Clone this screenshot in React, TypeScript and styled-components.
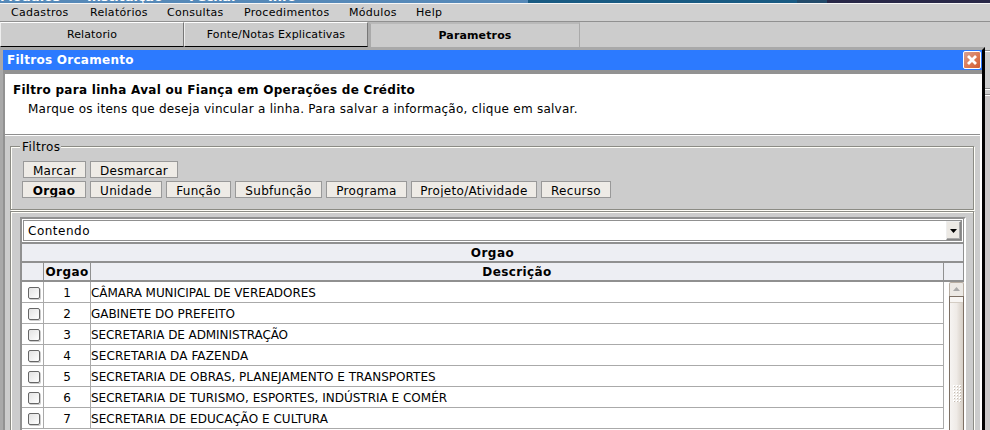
import React from "react";
import styled, { createGlobalStyle } from "styled-components";

const GlobalStyle = createGlobalStyle`
  * { box-sizing: border-box; }
  html, body { margin: 0; padding: 0; overflow: hidden; }
  body { width: 990px; height: 430px; background: #ccc; color: #000; font: 12px "DejaVu Sans", sans-serif; }
  button { font-family: inherit; color: inherit; margin: 0; }
`;

const Screen = styled.div`
  width: 990px;
  height: 430px;
  overflow: hidden;
  display: flex;
  flex-direction: column;
  background: #ccc;
`;

const TopStrip = styled.div`
  height: 3px;
  flex: none;
  display: flex;
  align-items: flex-end;
  overflow: hidden;
  background: linear-gradient(90deg, #5689b8 528px, #195b83 528px 797px, #234b6a 797px 827px, #292848 827px);
  color: #fff;
  font-size: 13px;
  font-weight: bold;
  letter-spacing: -0.2px;
  line-height: 16px;
`;

const StripItem = styled.span<{ $w: number }>`
  width: ${(p) => p.$w}px;
  flex: none;
  white-space: nowrap;
  margin-bottom: -2px;
`;

const MenuBar = styled.nav`
  height: 19px;
  flex: none;
  display: flex;
  padding-left: 11px;
  background: #d0d0d0;
  border-top: 1px solid #f7f7f7;
  border-bottom: 1px solid #909090;
  font-size: 11px;
  letter-spacing: 0.3px;
  line-height: 17px;
`;

const MenuItem = styled.span<{ $w: number }>`
  width: ${(p) => p.$w}px;
  white-space: nowrap;
`;

const TabBar = styled.div`
  height: 25px;
  flex: none;
  display: flex;
  background: #ccc;
  letter-spacing: 0.13px;
`;

const Tab = styled.div<{ $w: number }>`
  width: ${(p) => p.$w}px;
  height: 25px;
  border: 1px solid;
  border-color: #fff #777 #000 #eee;
  text-align: center;
  font-size: 11px;
  line-height: 23px;
`;

const ActiveTab = styled.div`
  width: 212px;
  height: 25px;
  border: solid #aaa;
  border-width: 2px 1px 0 3px;
  border-top-color: #b9b9b9;
  text-align: center;
  font-size: 11px;
  font-weight: bold;
  line-height: 23px;
`;

const Workspace = styled.div`
  flex: 1;
  min-height: 0;
  display: flex;
`;

const Dialog = styled.section`
  width: 985px;
  display: flex;
  flex-direction: column;
  border: 3px solid #a9a9a9;
  border-right-color: #000;
  border-bottom: 0;
  background: #929292;
`;

const TitleBar = styled.header`
  height: 20px;
  flex: none;
  display: flex;
  align-items: center;
  justify-content: space-between;
  padding: 0 1px 0 4px;
  background: #2c7aff;
  color: #fff;
  font-weight: bold;
  letter-spacing: 0.27px;
  line-height: 20px;
`;

const CloseButton = styled.button`
  width: 18px;
  height: 18px;
  padding: 0;
  display: flex;
  border: 1px solid #fff;
  border-radius: 2px;
  background: linear-gradient(135deg, #d4a196, #dc7954 55%, #cf5b31);
`;

const DialogBody = styled.div`
  flex: 1;
  min-height: 0;
  margin: 4px 0 0 2px;
  display: flex;
  flex-direction: column;
  background: #ccc;
  border-right: 2px solid #fff;
`;

const Intro = styled.div`
  height: 62px;
  flex: none;
  padding: 8px 8px 0;
  background: #fff;
  border-bottom: 1px solid #fff;
  box-shadow: inset 0 -1px #8f8f8f;
`;

const Heading = styled.h1`
  margin: 0;
  font-size: 12px;
  letter-spacing: 0.28px;
  line-height: 16px;
  white-space: nowrap;
`;

const Hint = styled.p`
  margin: 3px 0 0 15px;
  letter-spacing: 0.26px;
  line-height: 16px;
`;

const FilterGroup = styled.fieldset`
  flex: none;
  width: 964px;
  height: 72px;
  min-width: 0;
  margin: 2px 0 0 5px;
  padding: 1px 0 0 11px;
  border: 1px solid #8b8b84;
  box-shadow: 1px 1px #fffef8, inset 1px 1px #fffef8;
`;

const Legend = styled.legend`
  margin-left: -2px;
  padding: 0 1px 0 2px;
  height: 17px;
  background: #ccc;
  letter-spacing: 0.4px;
  line-height: 18px;
`;

const ButtonRow = styled.div<{ $top: number; $left: number }>`
  display: flex;
  gap: 4px;
  margin: ${(p) => p.$top}px 0 0 ${(p) => p.$left}px;
`;

const FilterButton = styled.button<{ $w: number; $bold?: boolean }>`
  width: ${(p) => p.$w}px;
  height: 17px;
  padding: 0;
  overflow: hidden;
  border: 1px solid #999;
  background: #eeebe6;
  font-size: 12px;
  font-weight: ${(p) => (p.$bold ? "bold" : "normal")};
  letter-spacing: 0.3px;
  line-height: 18px;
  white-space: nowrap;
`;

const GridFrame = styled.div`
  flex: none;
  width: 964px;
  height: 240px;
  margin: 1px 0 0 5px;
  padding: 5px 0 0 9px;
  border: 1px solid #8b8b84;
  box-shadow: 1px 1px #fffef8, inset 1px 1px #fffef8;
`;

const Grid = styled.div`
  width: 946px;
  height: 236px;
  display: flex;
  flex-direction: column;
  border: 2px solid #909090;
  border-right: 2px solid #fff;
  background: #fff;
`;

const SelectBox = styled.div`
  height: 23px;
  flex: none;
  padding: 1px;
  width: 942px;
  border-right: 1px solid #909090;
`;

const SelectInner = styled.div`
  height: 21px;
  display: flex;
  justify-content: space-between;
  border: 1px solid #909090;
  padding-left: 4px;
  letter-spacing: 0.5px;
  line-height: 20px;
`;

const DropButton = styled.span`
  width: 15px;
  height: 19px;
  background: #ece9e4;
  border: 1px solid;
  border-color: #eee #858585 #858585 #eee;
  box-shadow: inset -1px -1px #aaa;
  display: flex;
  align-items: center;
  justify-content: center;
`;

const Caption = styled.div`
  height: 19px;
  width: 942px;
  flex: none;
  border-top: 2px solid #909090;
  border-right: 1px solid #909090;
  background: #edeef3;
  font-weight: bold;
  letter-spacing: 0.45px;
  text-align: center;
  line-height: 18px;
`;

const HeadRow = styled.div`
  width: 942px;
  height: 21px;
  flex: none;
  display: grid;
  grid-template-columns: 22px 47px 853px 20px;
  border: solid #909090;
  border-width: 2px 0;
  background: #edeef3;
  font-weight: bold;
  letter-spacing: 0.4px;
  text-align: center;
  line-height: 18px;
`;

const HeadCell = styled.span`
  border-right: 1px solid #909090;
`;

const Body = styled.div`
  display: flex;
  flex: 1;
  min-height: 0;
`;

const Rows = styled.div`
  width: 922px;
  margin-right: 5px;
`;

const Row = styled.div`
  height: 21px;
  display: grid;
  grid-template-columns: 22px 47px 853px;
`;

const Cell = styled.span<{ $center?: boolean; $spacing?: number }>`
  display: block;
  height: 21px;
  border: solid #aaa;
  border-width: 0 1px 1px 0;
  letter-spacing: ${(p) => p.$spacing ?? 0}px;
  line-height: 22px;
  text-align: ${(p) => (p.$center ? "center" : "left")};
  white-space: nowrap;
`;

const CheckBox = styled.span`
  display: block;
  width: 12px;
  height: 12px;
  margin: 5px 0 0 6px;
  border: 1px solid #666;
  border-radius: 2px;
  background: linear-gradient(135deg, #e2e2e2, #fff);
  box-shadow: 1px 1px #ccc;
`;

const ScrollBar = styled.div`
  width: 15px;
  display: flex;
  flex-direction: column;
`;

const ScrollUp = styled.div`
  height: 14px;
  flex: none;
  border: 1px solid #b8aea3;
  border-bottom: 0;
  border-radius: 2px 2px 0 0;
  background: #ece9e5;
  display: flex;
  align-items: center;
  justify-content: center;
`;

const Thumb = styled.div`
  flex: 1;
  border: 1px solid #7d7065;
  border-bottom: 0;
  background: linear-gradient(90deg, #f6f4f2, #efebe7 50%, #d6cec5);
  padding: 88px 0 0 3px;
  box-shadow: inset 0 5px #f7f5f3, inset 0 6px #d4cdc4;
`;

const Behind = styled.div`
  flex: 1;
  display: flex;
  flex-direction: column;
  padding-top: 3px;
`;

const BehindPanel = styled.div`
  height: 40px;
  flex: none;
  border-top: 1px solid #8b8b8b;
  border-bottom: 1px solid #fff;
  box-shadow: inset 0 1px #fff, inset 0 -1px #8b8b8b;
  background: #ccc;
`;

const BehindPage = styled.div`
  flex: 1;
  margin-top: 4px;
  border-top: 1px solid #8b8b8b;
  box-shadow: inset 0 1px #fff;
  background: #c9c6c7;
`;

const menu: [string, number][] = [
  ["Cadastros", 79],
  ["Relatórios", 77],
  ["Consultas", 77],
  ["Procedimentos", 105],
  ["Módulos", 67],
  ["Help", 50],
];

const filters: [string, number][] = [
  ["Orgao", 64],
  ["Unidade", 72],
  ["Função", 65],
  ["Subfunção", 87],
  ["Programa", 81],
  ["Projeto/Atividade", 126],
  ["Recurso", 70],
];

const departments: [string, number][] = [
  ["CÂMARA MUNICIPAL DE VEREADORES", -0.06],
  ["GABINETE DO PREFEITO", -0.05],
  ["SECRETARIA DE ADMINISTRAÇÃO", -0.08],
  ["SECRETARIA DA FAZENDA", 0.1],
  ["SECRETARIA DE OBRAS, PLANEJAMENTO E TRANSPORTES", 0.02],
  ["SECRETARIA DE TURISMO, ESPORTES, INDÚSTRIA E COMÉR", 0],
  ["SECRETARIA DE EDUCAÇÃO E CULTURA", 0.03],
];

const gripDots = Array.from({ length: 18 }, (_, i) => ({ x: (i % 3) * 3, y: Math.floor(i / 3) * 3 }));

export default function App() {
  return (
    <Screen>
      <GlobalStyle />
      <TopStrip>
        <StripItem $w={87}>Módulos</StripItem>
        <StripItem $w={102}>Instituição</StripItem>
        <StripItem $w={79}>Fechar</StripItem>
        <StripItem $w={60}>Info</StripItem>
      </TopStrip>
      <MenuBar>
        {menu.map(([label, w]) => (
          <MenuItem key={label} $w={w}>{label}</MenuItem>
        ))}
      </MenuBar>
      <TabBar>
        <Tab $w={184}>Relatorio</Tab>
        <Tab $w={184}>Fonte/Notas Explicativas</Tab>
        <ActiveTab>Parametros</ActiveTab>
      </TabBar>
      <Workspace>
        <Dialog>
          <TitleBar>
            Filtros Orcamento
            <CloseButton aria-label="Fechar">
              <svg width="16" height="16" viewBox="0 0 16 16">
                <path d="M4 4l8 8M12 4l-8 8" stroke="#fff" strokeWidth="2.8" />
              </svg>
            </CloseButton>
          </TitleBar>
          <DialogBody>
            <Intro>
              <Heading>Filtro para linha Aval ou Fiança em Operações de Crédito</Heading>
              <Hint>Marque os itens que deseja vincular a linha. Para salvar a informação, clique em salvar.</Hint>
            </Intro>
            <FilterGroup>
              <Legend>Filtros</Legend>
              <ButtonRow $top={5} $left={1}>
                <FilterButton $w={63}>Marcar</FilterButton>
                <FilterButton $w={88}>Desmarcar</FilterButton>
              </ButtonRow>
              <ButtonRow $top={3} $left={0}>
                {filters.map(([label, w], i) => (
                  <FilterButton key={label} $w={w} $bold={i === 0}>{label}</FilterButton>
                ))}
              </ButtonRow>
            </FilterGroup>
            <GridFrame>
              <Grid>
                <SelectBox>
                  <SelectInner>
                    Contendo
                    <DropButton>
                      <svg width="7" height="4"><path d="M0 0h7L3.5 4z" fill="#000" /></svg>
                    </DropButton>
                  </SelectInner>
                </SelectBox>
                <Caption>Orgao</Caption>
                <HeadRow>
                  <HeadCell />
                  <HeadCell>Orgao</HeadCell>
                  <HeadCell>Descrição</HeadCell>
                  <HeadCell />
                </HeadRow>
                <Body>
                  <Rows>
                    {departments.map(([name, spacing], i) => (
                      <Row key={name}>
                        <Cell><CheckBox /></Cell>
                        <Cell $center>{i + 1}</Cell>
                        <Cell $spacing={spacing}>{name}</Cell>
                      </Row>
                    ))}
                  </Rows>
                  <ScrollBar>
                    <ScrollUp>
                      <svg width="7" height="5"><path d="M3.5 0L7 4H0z" fill="#aaa" /></svg>
                    </ScrollUp>
                    <Thumb>
                      <svg width="9" height="18" shapeRendering="crispEdges">
                        {gripDots.map((d) => (
                          <g key={`${d.x}-${d.y}`}>
                            <rect x={d.x} y={d.y} width="2" height="2" fill="#fff" />
                            <rect x={d.x + 1} y={d.y + 1} width="1" height="1" fill="#c5bcb2" />
                          </g>
                        ))}
                      </svg>
                    </Thumb>
                  </ScrollBar>
                </Body>
              </Grid>
            </GridFrame>
          </DialogBody>
        </Dialog>
        <Behind>
          <BehindPanel />
          <BehindPage />
        </Behind>
      </Workspace>
    </Screen>
  );
}
